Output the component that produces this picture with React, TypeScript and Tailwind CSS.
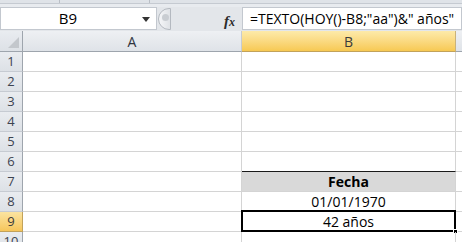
import React from "react";

const font = { fontFamily: '"Open Sans", "Noto Sans", sans-serif' };

function RowHeader({ n, selected }: { n: number; selected?: boolean }) {
  return (
    <div
      className={
        "h-[20px] border-b border-r flex items-center justify-center text-[13px] " +
        (selected
          ? "bg-gradient-to-b from-[#fbe4a0] to-[#f6c65a] border-b-[#c2a25a] border-r-[#c2a25a] text-[#3b3b3b]"
          : "bg-gradient-to-b from-[#e9ecf0] to-[#dde1e6] border-b-[#c6cbd2] border-r-[#9ea5ad] text-[#3c4350]")
      }
    >
      {n}
    </div>
  );
}

export default function App() {
  const rows = [1, 2, 3, 4, 5, 6, 7, 8, 9, 10];
  return (
    <div className="w-[462px] h-[242px] overflow-hidden bg-white" style={font}>
      {/* ribbon bottom */}
      <div className="h-[7px] flex flex-col">
        <div className="h-[3px] bg-[#dfe3e8] flex">
          <div className="w-[60px] border-r border-[#b9bec5]" />
          <div className="w-[90px] border-r border-[#b9bec5]" />
          <div className="flex-1" />
        </div>
        <div className="h-[4px] bg-[#e8ebef] border-t border-[#c5cad1]" />
      </div>
      {/* formula bar */}
      <div className="h-[23px] flex bg-[#e3e6ea]">
        <div className="w-[157px] bg-white border border-[#c3c8cf] flex items-center relative">
          <div className="w-[134px] text-center text-[15px] text-black">B9</div>
          <svg width="8" height="5" viewBox="0 0 8 5" className="absolute left-[141px] top-[9px]">
            <path d="M0 0 L8 0 L4 5 Z" fill="#333" />
          </svg>
        </div>
        <div className="w-[85px] flex items-center relative">
          <div className="w-[13px] h-[22px] ml-[1px] rounded-l-full border border-[#b4b9c0] bg-gradient-to-r from-[#f5f6f8] to-[#dfe2e6] relative">
            <div className="absolute left-[3px] top-[5px] w-[7px] h-[7px] rounded-full bg-[#c9cdd2]" />
          </div>
          <div
            className="absolute left-[67px] top-[3px] text-[15px] italic text-[#2b2b2b]"
            style={{ fontFamily: '"Liberation Serif", serif' }}
          >
            <span className="font-bold">f</span>
            <span className="text-[12px] font-bold">x</span>
          </div>
        </div>
        <div className="flex-1 bg-white border border-[#c3c8cf] flex items-center pl-[7px] text-[14px] text-black whitespace-nowrap">
          =TEXTO(HOY()-B8;"aa")&amp;" años"
        </div>
      </div>
      <div className="h-[1px] bg-[#e3e6ea]" />
      {/* grid */}
      <div className="grid grid-cols-[23px_219px_214px_1fr]">
        {/* header row */}
        <div className="h-[21px] bg-gradient-to-b from-[#e9ecf0] to-[#dde1e6] border-b border-r border-[#9ea5ad] relative">
          <svg width="11" height="11" viewBox="0 0 11 11" className="absolute right-[3px] bottom-[3px]">
            <path d="M11 0 L11 11 L0 11 Z" fill="#c3c7cc" />
          </svg>
        </div>
        <div className="h-[21px] bg-gradient-to-b from-[#eef0f3] to-[#dfe3e8] border-b border-r border-b-[#9ea5ad] border-r-[#c6cbd2] flex items-center justify-center text-[14px] text-[#2f3540]">
          A
        </div>
        <div className="h-[21px] bg-gradient-to-b from-[#fdeaa9] to-[#f7c952] border-b border-r border-b-[#c2a25a] border-r-[#c9b27a] flex items-center justify-center text-[14px] text-[#3b3b3b]">
          B
        </div>
        <div className="h-[21px] bg-gradient-to-b from-[#eef0f3] to-[#dfe3e8] border-b border-[#9ea5ad]" />

        {rows.map((n) => {
          const cellBase = "h-[20px] border-b border-r border-[#d4d4d4]";
          let bContent: React.ReactNode = null;
          let bClass = cellBase;
          if (n === 6) bClass = "h-[20px] border-b border-r border-b-[#1a1a1a] border-r-[#d4d4d4]";
          if (n === 7) {
            bClass = "h-[20px] border-b border-r border-[#d4d4d4] bg-[#d9d9d9]";
            bContent = <span className="font-bold">Fecha</span>;
          }
          if (n === 8) bContent = "01/01/1970";
          if (n === 9) bContent = "42 años";
          return (
            <React.Fragment key={n}>
              <RowHeader n={n} selected={n === 9} />
              <div className={cellBase} />
              <div className={bClass + " relative flex items-center justify-center text-[14px] text-black"}>
                {bContent}
                {n === 9 && (
                  <>
                    <div className="absolute -left-[1px] -top-[2px] -right-[1px] -bottom-[1px] border-[2px] border-black pointer-events-none" />
                    <div className="absolute -right-[3px] -bottom-[3px] w-[5px] h-[5px] bg-black border border-white" />
                  </>
                )}
              </div>
              <div className="h-[20px] border-b border-[#d4d4d4]" />
            </React.Fragment>
          );
        })}
      </div>
    </div>
  );
}
